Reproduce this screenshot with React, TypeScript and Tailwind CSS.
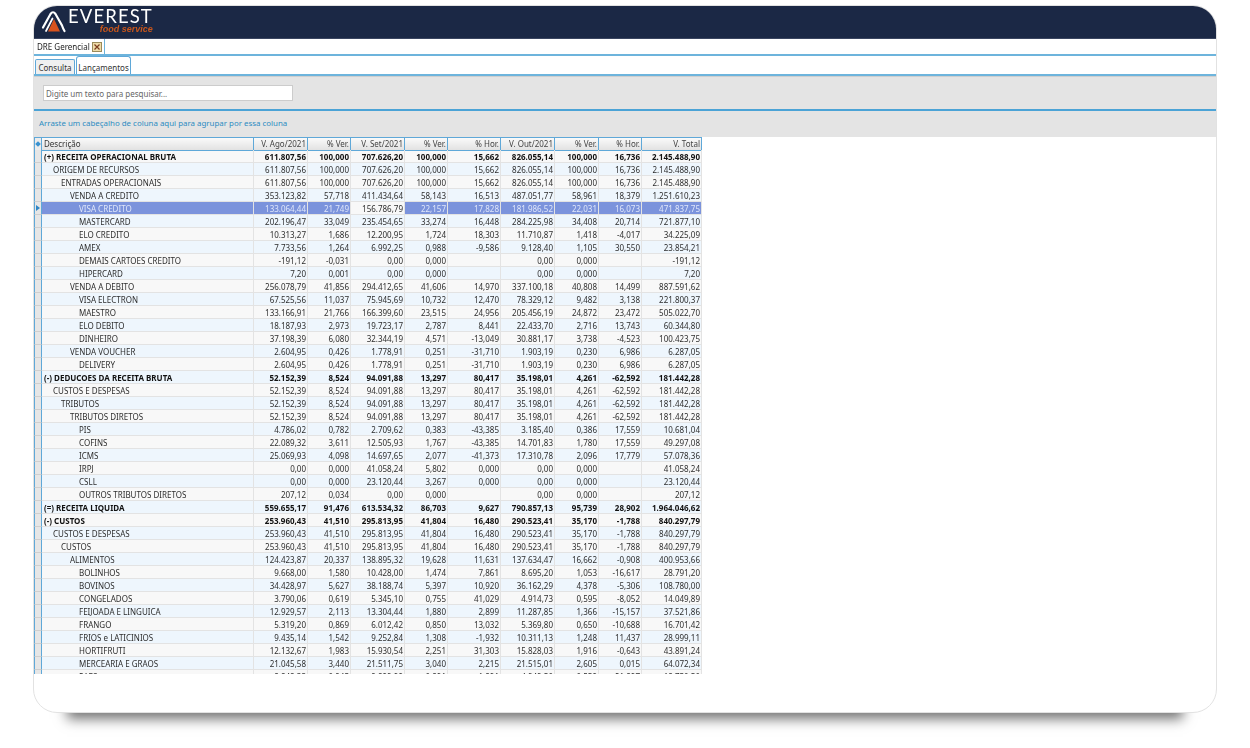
const gridCols = "grid grid-cols-[8px_212px_54px_43px_54px_43px_53px_54px_44px_43px_60px]";

const heads = ["V. Ago/2021", "% Ver.", "V. Set/2021", "% Ver.", "% Hor.", "V. Out/2021", "% Ver.", "% Hor.", "V. Total"];

const indents = ["pl-[2px]", "pl-[11px]", "pl-[19px]", "pl-[28px]", "pl-[37px]"];

type Row = [number, boolean, string, string[]];

const rows: Row[] = [
  [0, true, "(+) RECEITA OPERACIONAL BRUTA", ["611.807,56", "100,000", "707.626,20", "100,000", "15,662", "826.055,14", "100,000", "16,736", "2.145.488,90"]],
  [1, false, "ORIGEM DE RECURSOS", ["611.807,56", "100,000", "707.626,20", "100,000", "15,662", "826.055,14", "100,000", "16,736", "2.145.488,90"]],
  [2, false, "ENTRADAS OPERACIONAIS", ["611.807,56", "100,000", "707.626,20", "100,000", "15,662", "826.055,14", "100,000", "16,736", "2.145.488,90"]],
  [3, false, "VENDA A CREDITO", ["353.123,82", "57,718", "411.434,64", "58,143", "16,513", "487.051,77", "58,961", "18,379", "1.251.610,23"]],
  [4, false, "VISA CREDITO", ["133.064,44", "21,749", "156.786,79", "22,157", "17,828", "181.986,52", "22,031", "16,073", "471.837,75"]],
  [4, false, "MASTERCARD", ["202.196,47", "33,049", "235.454,65", "33,274", "16,448", "284.225,98", "34,408", "20,714", "721.877,10"]],
  [4, false, "ELO CREDITO", ["10.313,27", "1,686", "12.200,95", "1,724", "18,303", "11.710,87", "1,418", "-4,017", "34.225,09"]],
  [4, false, "AMEX", ["7.733,56", "1,264", "6.992,25", "0,988", "-9,586", "9.128,40", "1,105", "30,550", "23.854,21"]],
  [4, false, "DEMAIS CARTOES CREDITO", ["-191,12", "-0,031", "0,00", "0,000", "", "0,00", "0,000", "", "-191,12"]],
  [4, false, "HIPERCARD", ["7,20", "0,001", "0,00", "0,000", "", "0,00", "0,000", "", "7,20"]],
  [3, false, "VENDA A DEBITO", ["256.078,79", "41,856", "294.412,65", "41,606", "14,970", "337.100,18", "40,808", "14,499", "887.591,62"]],
  [4, false, "VISA ELECTRON", ["67.525,56", "11,037", "75.945,69", "10,732", "12,470", "78.329,12", "9,482", "3,138", "221.800,37"]],
  [4, false, "MAESTRO", ["133.166,91", "21,766", "166.399,60", "23,515", "24,956", "205.456,19", "24,872", "23,472", "505.022,70"]],
  [4, false, "ELO DEBITO", ["18.187,93", "2,973", "19.723,17", "2,787", "8,441", "22.433,70", "2,716", "13,743", "60.344,80"]],
  [4, false, "DINHEIRO", ["37.198,39", "6,080", "32.344,19", "4,571", "-13,049", "30.881,17", "3,738", "-4,523", "100.423,75"]],
  [3, false, "VENDA VOUCHER", ["2.604,95", "0,426", "1.778,91", "0,251", "-31,710", "1.903,19", "0,230", "6,986", "6.287,05"]],
  [4, false, "DELIVERY", ["2.604,95", "0,426", "1.778,91", "0,251", "-31,710", "1.903,19", "0,230", "6,986", "6.287,05"]],
  [0, true, "(-) DEDUCOES DA RECEITA BRUTA", ["52.152,39", "8,524", "94.091,88", "13,297", "80,417", "35.198,01", "4,261", "-62,592", "181.442,28"]],
  [1, false, "CUSTOS E DESPESAS", ["52.152,39", "8,524", "94.091,88", "13,297", "80,417", "35.198,01", "4,261", "-62,592", "181.442,28"]],
  [2, false, "TRIBUTOS", ["52.152,39", "8,524", "94.091,88", "13,297", "80,417", "35.198,01", "4,261", "-62,592", "181.442,28"]],
  [3, false, "TRIBUTOS DIRETOS", ["52.152,39", "8,524", "94.091,88", "13,297", "80,417", "35.198,01", "4,261", "-62,592", "181.442,28"]],
  [4, false, "PIS", ["4.786,02", "0,782", "2.709,62", "0,383", "-43,385", "3.185,40", "0,386", "17,559", "10.681,04"]],
  [4, false, "COFINS", ["22.089,32", "3,611", "12.505,93", "1,767", "-43,385", "14.701,83", "1,780", "17,559", "49.297,08"]],
  [4, false, "ICMS", ["25.069,93", "4,098", "14.697,65", "2,077", "-41,373", "17.310,78", "2,096", "17,779", "57.078,36"]],
  [4, false, "IRPJ", ["0,00", "0,000", "41.058,24", "5,802", "0,000", "0,00", "0,000", "", "41.058,24"]],
  [4, false, "CSLL", ["0,00", "0,000", "23.120,44", "3,267", "0,000", "0,00", "0,000", "", "23.120,44"]],
  [4, false, "OUTROS TRIBUTOS DIRETOS", ["207,12", "0,034", "0,00", "0,000", "", "0,00", "0,000", "", "207,12"]],
  [0, true, "(=) RECEITA LIQUIDA", ["559.655,17", "91,476", "613.534,32", "86,703", "9,627", "790.857,13", "95,739", "28,902", "1.964.046,62"]],
  [0, true, "(-) CUSTOS", ["253.960,43", "41,510", "295.813,95", "41,804", "16,480", "290.523,41", "35,170", "-1,788", "840.297,79"]],
  [1, false, "CUSTOS E DESPESAS", ["253.960,43", "41,510", "295.813,95", "41,804", "16,480", "290.523,41", "35,170", "-1,788", "840.297,79"]],
  [2, false, "CUSTOS", ["253.960,43", "41,510", "295.813,95", "41,804", "16,480", "290.523,41", "35,170", "-1,788", "840.297,79"]],
  [3, false, "ALIMENTOS", ["124.423,87", "20,337", "138.895,32", "19,628", "11,631", "137.634,47", "16,662", "-0,908", "400.953,66"]],
  [4, false, "BOLINHOS", ["9.668,00", "1,580", "10.428,00", "1,474", "7,861", "8.695,20", "1,053", "-16,617", "28.791,20"]],
  [4, false, "BOVINOS", ["34.428,97", "5,627", "38.188,74", "5,397", "10,920", "36.162,29", "4,378", "-5,306", "108.780,00"]],
  [4, false, "CONGELADOS", ["3.790,06", "0,619", "5.345,10", "0,755", "41,029", "4.914,73", "0,595", "-8,052", "14.049,89"]],
  [4, false, "FEIJOADA E LINGUICA", ["12.929,57", "2,113", "13.304,44", "1,880", "2,899", "11.287,85", "1,366", "-15,157", "37.521,86"]],
  [4, false, "FRANGO", ["5.319,20", "0,869", "6.012,42", "0,850", "13,032", "5.369,80", "0,650", "-10,688", "16.701,42"]],
  [4, false, "FRIOS e LATICINIOS", ["9.435,14", "1,542", "9.252,84", "1,308", "-1,932", "10.311,13", "1,248", "11,437", "28.999,11"]],
  [4, false, "HORTIFRUTI", ["12.132,67", "1,983", "15.930,54", "2,251", "31,303", "15.828,03", "1,916", "-0,643", "43.891,24"]],
  [4, false, "MERCEARIA E GRAOS", ["21.045,58", "3,440", "21.511,75", "3,040", "2,215", "21.515,01", "2,605", "0,015", "64.072,34"]],
  [4, false, "PAES", ["8.848,33", "0,945", "9.899,99", "0,891", "1,891", "4.949,50", "0,559", "21,897", "18.750,50"]],
];

function Logo() {
  return (
    <svg width="28" height="26" viewBox="0 0 28 26" className="shrink-0">
      <path d="M8 22.5 L14 10 L20 22.5 Z" fill="#d9531e" />
      <path d="M3 18.5 L10.5 5 Q13 1.5 15.5 5 L22 16.5 Q23 19.5 24.5 22" fill="none" stroke="#ffffff" strokeWidth="2.2" strokeLinecap="round" />
      <path d="M6 22 L12.5 9.5" fill="none" stroke="#ffffff" strokeWidth="1.7" strokeLinecap="round" />
    </svg>
  );
}

function CloseIcon() {
  return (
    <span className="flex h-[10px] w-[10px] items-center justify-center border border-[#9a8a5a] bg-[#eedba8]">
      <svg width="6" height="6" viewBox="0 0 6 6">
        <path d="M0.5 0.5 L5.5 5.5 M5.5 0.5 L0.5 5.5" stroke="#7a3b1e" strokeWidth="1.2" />
      </svg>
    </span>
  );
}

function HeaderRow() {
  return (
    <div className={`${gridCols} h-[13px]`}>
      <div className="flex items-center justify-center border border-[#5fa8d8] bg-[#ececec]">
        <span className="h-[4px] w-[4px] rotate-45 bg-[#3b93d0]" />
      </div>
      <div className="flex items-center border-y border-r border-[#5fa8d8] bg-gradient-to-b from-[#fafafa] to-[#e2e2e2] pl-[2px] text-[#333]">
        Descrição
      </div>
      {heads.map((h, i) => (
        <div key={i} className="flex items-center justify-end border-y border-r border-[#5fa8d8] bg-gradient-to-b from-[#fafafa] to-[#e2e2e2] pr-[1px] text-[#444]">
          {h}
        </div>
      ))}
    </div>
  );
}

function DataRow({ row, index }: { row: Row; index: number }) {
  const [level, bold, name, values] = row;
  const selected = index === 4;
  const stripe = index % 2 === 0 ? "bg-[#f8f8f8]" : "bg-[#eef6fd]";
  const weight = bold ? "font-bold text-[#111]" : "text-[#2e2e2e]";
  return (
    <div className={`${gridCols} h-[13px] ${stripe} ${weight}`}>
      <div className="flex items-center justify-center border-x border-b border-x-[#5fa8d8] border-b-[#cfcfcf] bg-[#e6e6e6]">
        {selected && <span className="h-0 w-0 border-y-[3px] border-l-[4px] border-y-transparent border-l-[#2f86c5]" />}
      </div>
      <div className={`flex items-center border-r border-b border-[#e3e3e3] pt-[1px] leading-none whitespace-nowrap ${indents[level]} ${selected ? "bg-[#7b93dc] text-[#dfe6fa]" : ""}`}>
        {name}
      </div>
      {values.map((v, i) => (
        <div
          key={i}
          className={`flex items-center justify-end border-r border-b border-[#e3e3e3] pt-[1px] pr-[1px] leading-none ${selected && i !== 2 ? "bg-[#7b93dc] text-[#dfe6fa]" : ""}`}
        >
          {v}
        </div>
      ))}
    </div>
  );
}

export default function App() {
  return (
    <div className="h-[748px] w-full overflow-hidden bg-white pt-[5px] pl-[33px] font-['Noto_Sans',sans-serif] text-[8px]">
      <div className="flex h-[708px] w-[1184px] flex-col overflow-hidden rounded-[24px] border border-[#e2e2e2] bg-white shadow-[0_40px_12px_-34px_rgba(0,0,0,0.55)] blur-[0.3px]">
        <header className="flex h-[33px] shrink-0 items-start border-b border-[#3a4560] bg-[#1b2845] pl-[6px]">
          <div className="mt-[3px]">
            <Logo />
          </div>
          <div className="mt-[3px] flex flex-col">
            <span className="font-['Lato',sans-serif] text-[18.5px] leading-[15px] font-normal tracking-[1.1px] text-white">EVEREST</span>
            <span className="self-end pt-[1px] font-['Liberation_Sans',sans-serif] text-[9px] leading-[8px] font-bold text-[#c8561b] italic">food service</span>
          </div>
        </header>

        <div className="flex h-[17px] shrink-0 border-b-2 border-b-[#6db4dc] bg-white">
          <div className="flex w-[71px] items-center gap-[2px] border-r border-[#6db4dc] pt-[1px] pl-[3px] text-[#222]">
            <span className="whitespace-nowrap">DRE Gerencial</span>
            <CloseIcon />
          </div>
        </div>

        <div className="flex h-[20px] shrink-0 items-end gap-[1px] border-b-2 border-[#6db4dc] bg-white pl-[1px]">
          <div className="flex h-[15px] w-[40px] items-center justify-center rounded-t-[2px] border-x border-t border-[#5fa8d8] bg-[#f0f0f0] pt-[1px] text-[#333]">Consulta</div>
          <div className="flex h-[18px] w-[55px] items-center justify-center rounded-t-[3px] border-x border-t border-[#5fa8d8] bg-white pt-[4px] text-[#333]">Lançamentos</div>
        </div>

        <div className="flex h-[35px] shrink-0 items-center border-t border-b-2 border-t-[#cfcfcf] border-b-[#4ba3d6] bg-[#e4e4e4] pl-[9px]">
          <div className="flex h-[16px] w-[250px] items-center border border-[#cccccc] bg-white pt-[1px] pl-[2px] text-[#666]">
            Digite um texto para pesquisar...
          </div>
        </div>

        <div className="flex h-[26px] shrink-0 items-center bg-[#e4e4e4] pl-[5px] text-[7.9px] text-[#2c8cc2]">
          Arraste um cabeçalho de coluna aqui para agrupar por essa coluna
        </div>

        <div className="h-[537px] w-[668px] shrink-0 overflow-hidden">
          <HeaderRow />
          {rows.map((r, i) => (
            <DataRow key={i} row={r} index={i} />
          ))}
        </div>
      </div>
    </div>
  );
}
